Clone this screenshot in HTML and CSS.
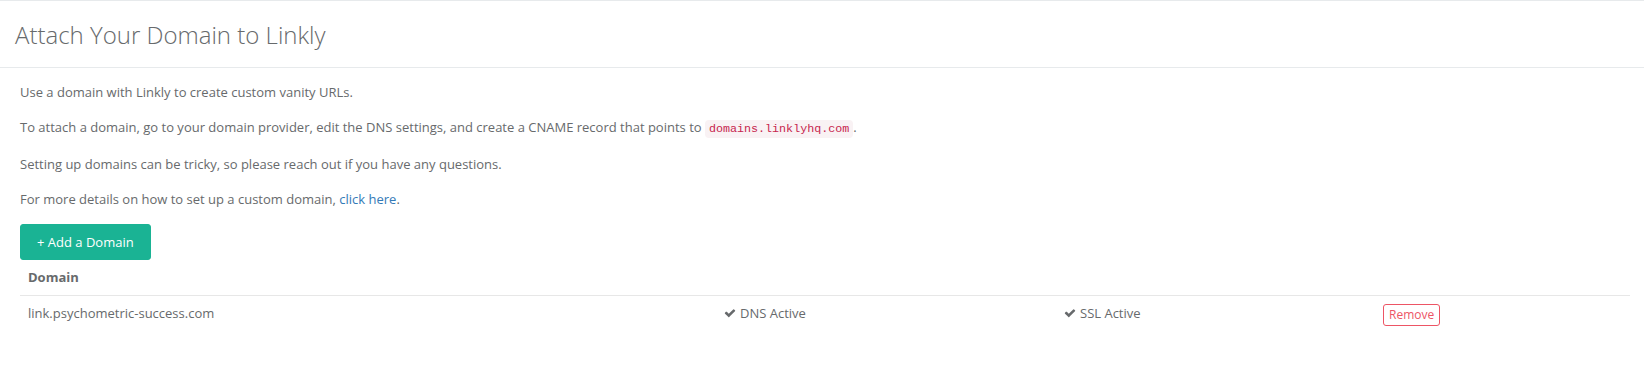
FILE: index.html
```html
<!DOCTYPE html>
<html lang="en">
<head>
<meta charset="utf-8">
<title>Attach Your Domain to Linkly</title>
<link rel="stylesheet" href="styles.css">
</head>
<body>
<div class="ibox">
  <div class="ibox-title">
    <h2 class="title">Attach Your Domain to Linkly</h2>
  </div>
  <div class="ibox-content">
    <p class="para">Use a domain with Linkly to create custom vanity URLs.</p>
    <p class="para">To attach a domain, go to your domain provider, edit the DNS settings, and create a CNAME record that points to <code class="code">domains.linklyhq.com</code>.</p>
    <p class="para">Setting up domains can be tricky, so please reach out if you have any questions.</p>
    <p class="para">For more details on how to set up a custom domain, <a class="link" href="#">click here</a>.</p>
    <button class="btn-primary" type="button">+ Add a Domain</button>
    <table class="domains">
      <thead>
        <tr>
          <th class="col-domain">Domain</th>
          <th class="col-dns"></th>
          <th class="col-ssl"></th>
          <th class="col-action"></th>
        </tr>
      </thead>
      <tbody>
        <tr>
          <td>link.psychometric-success.com</td>
          <td><span class="status"><svg class="check" viewBox="0 0 1792 1792"><path d="M1671 566q0 40-28 68l-724 724-136 136q-28 28-68 28t-68-28l-136-136-362-362q-28-28-28-68t28-68l136-136q28-28 68-28t68 28l294 295 656-657q28-28 68-28t68 28l136 136q28 28 28 68z"/></svg>DNS Active</span></td>
          <td><span class="status"><svg class="check" viewBox="0 0 1792 1792"><path d="M1671 566q0 40-28 68l-724 724-136 136q-28 28-68 28t-68-28l-136-136-362-362q-28-28-28-68t28-68l136-136q28-28 68-28t68 28l294 295 656-657q28-28 68-28t68 28l136 136q28 28 28 68z"/></svg>SSL Active</span></td>
          <td><button class="btn-remove" type="button">Remove</button></td>
        </tr>
      </tbody>
    </table>
  </div>
</div>
</body>
</html>
```

FILE: styles.css
```css
* { box-sizing: border-box; }

html, body {
  margin: 0;
  padding: 0;
  background: #ffffff;
}

body {
  font-family: "Open Sans", "Liberation Sans", sans-serif;
  font-size: 13px;
  line-height: 1.42857;
  color: #676a6c;
}

.ibox {
  background: #ffffff;
}

.ibox-title {
  border-top: 1px solid #e7eaec;
  height: 67px;
  padding: 21px 15px 0 15px;
}

.title {
  margin: 0;
  font-size: 24px;
  font-weight: 300;
  line-height: 26px;
  color: #676a6c;
}

.ibox-content {
  border-top: 1px solid #e7eaec;
  padding: 14px 14px 20px 20px;
}

.para {
  margin: 0 0 15px 0;
  line-height: 20px;
}

.code {
  font-family: "Liberation Mono", monospace;
  font-size: 11.7px;
  color: #c7254e;
  background: #f9f2f4;
  padding: 2px 4px;
  border-radius: 4px;
}

.link {
  color: #337ab7;
  text-decoration: none;
}

.btn-primary {
  display: block;
  margin-top: 1px;
  font-family: inherit;
  font-size: 13px;
  line-height: 20px;
  padding: 7px 16px;
  color: #ffffff;
  background: #1ab394;
  border: 1px solid #1ab394;
  border-radius: 3px;
  cursor: pointer;
}

.domains {
  width: 100%;
  border-collapse: collapse;
  table-layout: fixed;
}

.domains th,
.domains td {
  padding: 8px;
  text-align: left;
  vertical-align: top;
  line-height: 1.42857;
}

.domains th {
  font-weight: 700;
  border-bottom: 1px solid #e7e7e7;
}

.col-domain { width: 696px; }
.col-dns { width: 340px; }
.col-ssl { width: 319px; }
.col-action { width: 255px; }

.status {
  display: inline-flex;
  align-items: center;
  gap: 4px;
}

.check {
  width: 12px;
  height: 12px;
  fill: #676a6c;
}

.btn-remove {
  font-family: inherit;
  font-size: 12px;
  line-height: 18px;
  padding: 1px 5px;
  color: #ed5565;
  background: #ffffff;
  border: 1px solid #ed5565;
  border-radius: 3px;
  cursor: pointer;
}
```
